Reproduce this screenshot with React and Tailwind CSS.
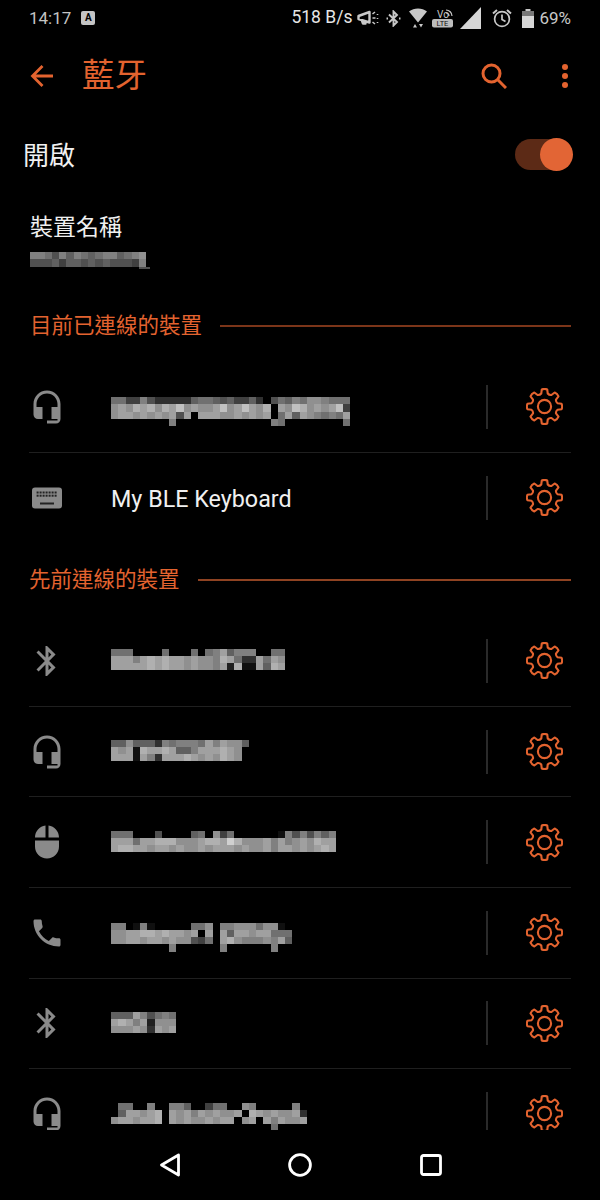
import React from "react";

const ORANGE = "#e3632f";
const GREY = "#8a8a8a";

function gearPath() {
  const c = 18.5;
  const rTip = 17.3, rRoot = 13.4;
  const p = (r, deg) => {
    const a = ((deg - 90) * Math.PI) / 180;
    return `${(c + r * Math.cos(a)).toFixed(2)} ${(c + r * Math.sin(a)).toFixed(2)}`;
  };
  let d = "";
  for (let i = 0; i < 8; i++) {
    const t = i * 45;
    d += (i === 0 ? "M" : "L") + p(rRoot, t - 14);
    d += "L" + p(rTip, t - 9);
    d += "Q" + p(rTip + 0.9, t) + " " + p(rTip, t + 9);
    d += "L" + p(rRoot, t + 14);
    d += "A" + `4 4 0 0 0 ` + p(rRoot, t + 31);
  }
  return d + "Z";
}
const GEAR = gearPath();

function Gear() {
  return (
    <svg width="37" height="37" viewBox="0 0 37 37" fill="none" stroke={ORANGE} strokeWidth="2.1" strokeLinejoin="round" className="shrink-0 ml-[38px] mr-[8px]">
      <path d={GEAR} />
      <circle cx="18.5" cy="18.5" r="6.6" />
    </svg>
  );
}

const Headset = () => (
  <svg width="36" height="36" viewBox="0 0 24 24" fill={GREY}>
    <path d="M12 1c-4.97 0-9 4.03-9 9v7c0 1.66 1.34 3 3 3h3v-8H5v-2c0-3.87 3.13-7 7-7s7 3.13 7 7v2h-4v8h4v1h-7v2h6c1.66 0 3-1.34 3-3V10c0-4.97-4.03-9-9-9z" />
  </svg>
);
const Bluetooth = () => (
  <svg width="36" height="36" viewBox="0 0 24 24" fill={GREY}>
    <path d="M17.71 7.71L12 2h-1v7.59L6.41 5 5 6.41 10.59 12 5 17.59 6.41 19 11 14.41V22h1l5.71-5.71-4.3-4.29 4.3-4.29zM13 5.83l1.88 1.88L13 9.59V5.83zm1.88 10.46L13 18.17v-3.76l1.88 1.88z" />
  </svg>
);
const Mouse = () => (
  <svg width="36" height="36" viewBox="0 0 24 24" fill={GREY}>
    <path d="M13 1.07V9h7c0-4.08-3.05-7.44-7-7.93zM4 15c0 4.42 3.58 8 8 8s8-3.58 8-8v-4H4v4zm7-13.93C7.05 1.56 4 4.92 4 9h7V1.07z" />
  </svg>
);
const Phone = () => (
  <svg width="36" height="36" viewBox="0 0 24 24" fill={GREY}>
    <path d="M6.62 10.79c1.44 2.83 3.76 5.14 6.59 6.59l2.2-2.2c.27-.27.67-.36 1.02-.24 1.12.37 2.33.57 3.57.57.55 0 1 .45 1 1V20c0 .55-.45 1-1 1-9.39 0-17-7.61-17-17 0-.55.45-1 1-1h3.5c.55 0 1 .45 1 1 0 1.25.2 2.45.57 3.57.11.35.03.74-.25 1.02l-2.2 2.2z" />
  </svg>
);
const Keyboard = () => {
  const keys = [];
  for (let r = 0; r < 2; r++) {
    for (let c = 0; c < 7; c++) {
      keys.push(<rect key={`${r}-${c}`} x={4.6 + c * 3} y={4 + r * 3.2} width="2" height="2" fill="#222" />);
    }
  }
  return (
    <svg width="36" height="36" viewBox="0 0 36 36">
      <g transform="translate(3 7.5)">
        <rect x="0" y="0" width="30" height="21" rx="3" fill={GREY} />
        {keys}
        <rect x="8" y="15" width="14" height="2" fill="#222" />
      </g>
    </svg>
  );
};

function Mosaic({ rows, className }) {
  return (
    <div className={"self-start blur-[0.4px] " + className}>
      {rows.map((r, i) => (
        <div key={i} className="flex h-[7.3px]">
          {r.split("").map((ch, j) => {
            const v = parseInt(ch, 16) * 16;
            return <div key={j} className="w-[7.25px] h-[7.3px] shrink-0" style={{ backgroundColor: `rgb(${v},${v},${v})` }} />;
          })}
        </div>
      ))}
    </div>
  );
}

function Row({ icon, rows, mt, last }) {
  return (
    <div className={"mx-[29px] h-[90.6px] flex items-center border-b " + (last ? "border-transparent" : "border-[#1f1f1f]")}>
      <div className="w-[36px] h-[36px] shrink-0">{icon}</div>
      <div className="ml-[46px] flex-1 min-w-0 self-stretch flex">
        <Mosaic rows={rows} className={mt} />
      </div>
      <div className="w-[2px] h-[44px] bg-[#2a2a2a] shrink-0" />
      <Gear />
    </div>
  );
}

function SectionHead({ children, h, lineClass }) {
  return (
    <div className={"flex items-center pl-[30px] pr-[29px] text-[21.5px] text-[#e3632f] " + h}>
      <span className="shrink-0 leading-[30px]">{children}</span>
      <div className={"flex-1 ml-[18px] " + lineClass} />
    </div>
  );
}

const M_NAME = [
  "8875868767886789",
  "5556466565655548",
  "00000000000000055",
];
const M1 = [
  "774485333336776564463057687998777",
  "9a9bab9bac9a99ac9aca9b0a9cb9a9ac4",
  "9aa9a9a9a5a0aaa99a9a9a07a6a98787a",
  "000000008000000000000087000000007",
];
const M2 = [
  "777000070007078a68880077",
  "aaa8ababaa9a998ba733a7a9",
  "aaaaababaa9a998a2b11a6ba",
];
const M3 = [
  "6696663878887a8a996",
  "a9a1baaba668aaaba90",
  "aaa1a83aaaba9a9ba90",
];
const M4 = [
  "7770005000067094700000018585868",
  "aaa7aabbb999abbadb999a8a89a9baa",
  "abbaa9aa9a99a9aaa9a99a8aa9a9aba",
];
const M5 = [
  "8801810000077908899979910",
  "99aabbabaa9a0a0a6aa9aa777",
  "99aa9aa9a995470ab988898a6",
  "0000000080000008000000800",
];
const M6 = ["666a85787", "aba8a2999", "999a93a9a"];
const M7 = [
  "077008008860047700980000080",
  "06aa9ab0a9a8a9a99a0ba9a99a3",
  "9aa9aab0a9a99a9aa09a0a8a99a",
  "000000000000000000000070000",
];

export default function App() {
  return (
    <div className="relative h-[1200px] w-[600px] overflow-hidden bg-black font-['Roboto','Noto_Sans_CJK_TC',sans-serif]">
      {/* status bar */}
      <div className="h-[36px] flex items-center justify-between pl-[29px] pr-[29px]">
        <div className="flex items-center">
          <span className="text-[17px] text-[#c4c4c4] leading-none">14:17</span>
          <div className="ml-[10px] w-[14px] h-[14px] rounded-[2px] bg-[#c4c4c4] flex items-center justify-center text-[10px] font-bold leading-none text-black">A</div>
        </div>
        <div className="flex items-center">
          <span className="text-[17.5px] text-[#e6e6e6] leading-none">518 B/s</span>
          <svg width="23" height="16" viewBox="0 0 23 16" fill="none" stroke="#c8c8c8" strokeWidth="2.4" className="ml-[5px]">
            <path d="M1.5 6L12.5 2v10.5L1.5 9z M4.5 9.5l1.5 4h2.5L7.5 10.3" strokeLinejoin="round" />
            <path d="M15.5 8h3 M15.5 4l2.5-2 M15.5 12l2.5 2 M20.5 4v1 M20.5 8v1 M20.5 12v1" strokeWidth="1.6" />
          </svg>
          <svg width="15" height="17" viewBox="0 0 15 17" fill="none" stroke="#c8c8c8" strokeWidth="1.9" className="ml-[6px]">
            <path d="M3 4.5l8 7.5-3.5 3.5V1.5L11 5 3 12.5" />
            <path d="M0.5 8.5h1.5 M13 8.5h1.5" />
          </svg>
          <svg width="18" height="20" viewBox="0 0 18 20" fill="#c8c8c8" className="ml-[8px]">
            <path d="M0 3.5C5 -0.5 13 -0.5 18 3.5L9 14.5z" />
            <path d="M4 19.5l2-3.5 2 3.5zM10 16h4l-2 3.5z" />
          </svg>
          <svg width="22" height="20" viewBox="0 0 22 20" className="ml-[5px]">
            <text x="5" y="10" fontSize="10" fill="#c8c8c8" fontFamily="Roboto, sans-serif">Vo</text>
            <path d="M14 5a3 3 0 0 1 3 3 M14 2a6 6 0 0 1 6 6" fill="none" stroke="#c8c8c8" strokeWidth="1.2" />
            <rect x="0" y="11" width="21" height="8.5" rx="2" fill="#bdbdbd" />
            <text x="10.5" y="18" fontSize="7.5" fill="#111" textAnchor="middle" fontFamily="Roboto, sans-serif">LTE</text>
          </svg>
          <svg width="21" height="22" viewBox="0 0 21 22" fill="#d6d6d6" className="ml-[6px]">
            <path d="M21 0V22H0z" />
          </svg>
          <svg width="20" height="20" viewBox="0 0 20 20" fill="none" stroke="#c8c8c8" strokeWidth="1.7" className="ml-[11px]">
            <circle cx="10" cy="11" r="7.4" />
            <path d="M10 6.5V11.5L13.5 13.5" />
            <path d="M1 5.5L5 2 M19 5.5L15 2" strokeWidth="2" />
          </svg>
          <svg width="12" height="19" viewBox="0 0 12 19" className="ml-[10px]">
            <rect x="3.5" y="0" width="5" height="2" fill="#c8c8c8" />
            <rect x="0" y="2" width="12" height="17" fill="#d6d6d6" />
            <rect x="0" y="2" width="12" height="5" fill="#777" />
          </svg>
          <span className="ml-[5px] text-[17px] text-[#c8c8c8] leading-none">69%</span>
        </div>
      </div>

      {/* toolbar */}
      <div className="h-[80px] flex items-center pl-[30px] pr-[32px]">
        <svg width="24" height="24" viewBox="0 0 24 24" fill="none" stroke={ORANGE} strokeWidth="2.8">
          <path d="M23 12H2.5 M12.5 2L2.5 12l10 10" />
        </svg>
        <span className="ml-[28px] text-[32.5px] leading-[40px] text-[#e3632f]">藍牙</span>
        <svg width="26" height="26" viewBox="0 0 26 26" fill="none" stroke={ORANGE} strokeWidth="3" className="ml-auto">
          <circle cx="10.5" cy="10.5" r="8.5" />
          <path d="M16.5 16.5L25 25" />
        </svg>
        <svg width="6" height="24" viewBox="0 0 6 24" fill={ORANGE} className="ml-[55px]">
          <circle cx="3" cy="3" r="3" />
          <circle cx="3" cy="12" r="3" />
          <circle cx="3" cy="21" r="3" />
        </svg>
      </div>

      {/* switch */}
      <div className="h-[76px] flex items-center justify-between pl-[23px] pr-[27px]">
        <span className="mt-[3px] text-[26px] text-[#f0f0f0] leading-[36px]">開啟</span>
        <div className="relative w-[58px] h-[33px] flex items-center">
          <div className="w-[50px] h-[31px] rounded-full bg-[#5c2a16]" />
          <div className="absolute right-0 top-0 w-[33px] h-[33px] rounded-full bg-[#e26535]" />
        </div>
      </div>

      {/* device name */}
      <div className="pl-[30px] pt-[21px] h-[112px]">
        <div className="text-[23px] leading-[30px] text-[#f0f0f0]">裝置名稱</div>
        <div className="mt-[9px] h-[17px] overflow-hidden w-[120px] flex">
          <Mosaic rows={M_NAME} className="" />
        </div>
      </div>

      <SectionHead h="h-[44px] mb-[14px]" lineClass="h-[2px] bg-[#7c3519]">目前已連線的裝置</SectionHead>
      <Row icon={<Headset />} rows={M1} mt="mt-[35px]" />
      <div className="mx-[29px] h-[90.6px] flex items-center">
        <div className="w-[36px] h-[36px] shrink-0"><Keyboard /></div>
        <div className="ml-[46px] mt-[2px] flex-1 min-w-0 text-[23.3px] leading-[30px] text-[#f0f0f0]">My BLE Keyboard</div>
        <div className="w-[2px] h-[44px] bg-[#2a2a2a] shrink-0" />
        <Gear />
      </div>

      <SectionHead h="h-[73px] -ml-px" lineClass="h-[2px] bg-[#8f4322]">先前連線的裝置</SectionHead>
      <Row icon={<Bluetooth />} rows={M2} mt="mt-[32.4px]" />
      <Row icon={<Headset />} rows={M3} mt="mt-[32.8px]" />
      <Row icon={<Mouse />} rows={M4} mt="mt-[33.2px]" />
      <Row icon={<Phone />} rows={M5} mt="mt-[34.6px]" />
      <Row icon={<Bluetooth />} rows={M6} mt="mt-[33px]" />
      <Row icon={<Headset />} rows={M7} mt="mt-[33.4px]" last />

      {/* nav bar */}
      <div className="absolute left-0 right-0 bottom-0 h-[70px] bg-black flex items-center pl-[158px]">
        <svg width="24" height="24" viewBox="0 0 24 24" fill="none" stroke="#fff" strokeWidth="2.8" strokeLinejoin="round">
          <path d="M20.5 2L3.5 12l17 10z" />
        </svg>
        <svg width="24" height="24" viewBox="0 0 24 24" fill="none" stroke="#fff" strokeWidth="2.8" className="ml-[106px]">
          <circle cx="12" cy="12" r="10.4" />
        </svg>
        <svg width="24" height="24" viewBox="0 0 24 24" fill="none" stroke="#fff" strokeWidth="2.8" strokeLinejoin="round" className="ml-[107px]">
          <rect x="2.5" y="2.5" width="19" height="19" rx="2" />
        </svg>
      </div>
    </div>
  );
}
